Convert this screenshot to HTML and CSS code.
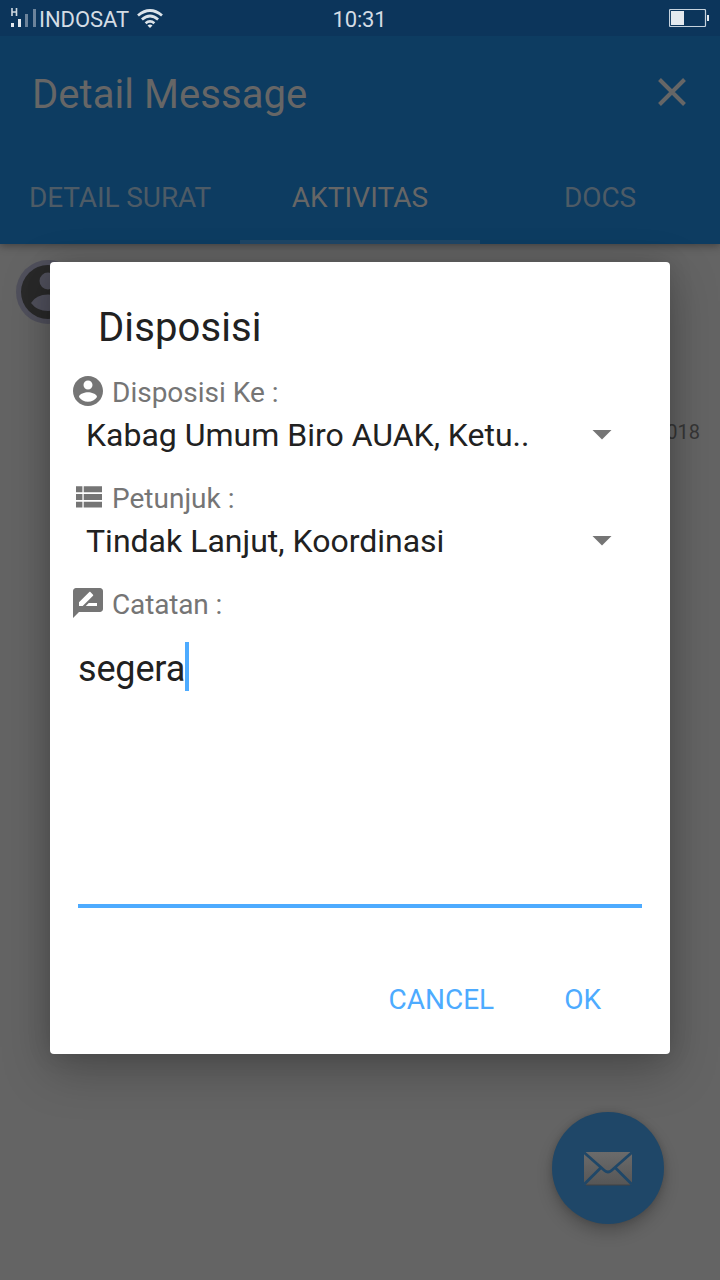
FILE: index.html
```html
<!DOCTYPE html>
<html lang="id">
<head>
<meta charset="utf-8">
<title>Detail Message</title>
<link rel="stylesheet" href="styles.css">
</head>
<body>
<div class="screen">
  <header class="header">
    <div class="status">
      <svg class="signal" width="28" height="20" viewBox="0 0 28 20">
        <path class="lit" d="M1 15h3v4h-3zM8 11h3v8h-3z"/>
        <path class="dim" d="M15 6h3v13h-3zM23 1h3v18h-3z"/>
        <path class="letter-mark" d="M2 0v8M6.500 0v8M2 4h4.500"/>
      </svg>
      <span class="carrier">INDOSAT</span>
      <svg class="wifi" width="26" height="20" viewBox="0 0 26 20">
        <path class="arc" d="M1 6.500Q13 -3.500 25 6.500M4.900 10.500Q13 3.500 21.100 10.500M8.600 14.200Q13 10.500 17.400 14.200"/>
        <path class="lit" d="M10.500 16.500Q13 14.600 15.500 16.500L13 19z"/>
      </svg>
      <span class="clock">10:31</span>
      <svg class="battery" width="40" height="18" viewBox="0 0 40 18">
        <rect class="cell" x=".5" y=".5" width="36" height="17" rx="1"/>
        <path class="lit" d="M2 2h13v14H2zM38 6h2v6h-2z"/>
      </svg>
    </div>
    <div class="toolbar">
      <h1 class="title">Detail Message</h1>
      <svg class="close" width="28" height="28" viewBox="0 0 28 28"><path d="M1.500 1.500l25 25M26.500 1.500l-25 25"/></svg>
    </div>
    <nav class="tabs">
      <span class="tab">DETAIL SURAT</span>
      <span class="tab active">AKTIVITAS</span>
      <span class="tab">DOCS</span>
    </nav>
  </header>
  <main class="content">
    <svg class="avatar" width="64" height="64" viewBox="0 0 64 64">
      <circle class="ring" cx="32" cy="32" r="32"/>
      <circle class="disc" cx="32" cy="32" r="27"/>
      <circle class="ring" cx="32" cy="21" r="8.500"/>
      <path class="ring" d="M15 43Q20 34.500 32 34.500T49 43Q43 51 32 51T15 43z"/>
    </svg>
    <span class="date">2018</span>
  </main>
  <div class="fab">
    <svg width="48" height="34" viewBox="0 0 48 34">
      <defs><linearGradient id="paper" x1="0" y1="0" x2="0" y2="1"><stop offset="0" stop-color="#6b6b6b"/><stop offset="1" stop-color="#565656"/></linearGradient></defs>
      <rect width="48" height="33" rx="1.500" fill="url(#paper)"/>
      <path class="edge" d="M2 33h44"/>
      <path class="fold" d="M0 .5L20.500 18.500Q24 21.500 27.500 18.500L48 .5M0 32.500L16.500 16M48 32.500L31.500 16"/>
    </svg>
  </div>
  <section class="dialog">
    <h2 class="heading">Disposisi</h2>
    <div class="label">
      <svg class="icon" width="36" height="36" viewBox="0 0 24 24"><path d="M12 2C6.480 2 2 6.480 2 12s4.480 10 10 10 10-4.480 10-10S17.520 2 12 2zm0 3c1.660 0 3 1.340 3 3s-1.340 3-3 3-3-1.340-3-3 1.340-3 3-3zm0 14.200c-2.500 0-4.710-1.280-6-3.220.03-1.990 4-3.080 6-3.080 1.990 0 5.970 1.090 6 3.080-1.290 1.940-3.500 3.220-6 3.220z"/></svg>
      <span>Disposisi Ke :</span>
    </div>
    <div class="select"><span class="value">Kabag Umum Biro AUAK, Ketu..</span><i class="arrow"></i></div>
    <div class="label">
      <svg class="icon" width="36" height="36" viewBox="0 0 36 36"><path d="M6 7.300h6.400v6H6zM13.700 7.300h18.300v6H13.700zM6 15h6.400v6H6zM13.700 15h18.300v6H13.700zM6 22.700h6.400v5.800H6zM13.700 22.700h18.300v5.800H13.700z"/></svg>
      <span>Petunjuk :</span>
    </div>
    <div class="select"><span class="value">Tindak Lanjut, Koordinasi</span><i class="arrow"></i></div>
    <div class="label">
      <svg class="icon" width="36" height="36" viewBox="0 0 24 24"><path d="M20 2H4c-1.100 0-1.990.9-1.990 2L2 22l4-4h14c1.100 0 2-.9 2-2V4c0-1.100-.9-2-2-2zM6 14v-2.470l6.880-6.880c.2-.2.51-.2.710 0l1.770 1.770c.2.2.2.51 0 .71L8.470 14H6zm12 0h-7.500l2-2H18v2z"/></svg>
      <span class="snug">Catatan :</span>
    </div>
    <div class="note"><span class="typed">segera</span><i class="caret"></i></div>
    <div class="actions"><span class="cancel">CANCEL</span><span class="ok">OK</span></div>
  </section>
</div>
</body>
</html>
```

FILE: styles.css
```css
* { box-sizing: border-box; }
body { margin: 0; font-family: Roboto, sans-serif; }
h1, h2 { margin: 0; font-weight: 400; }
svg { display: block; flex: none; }
.screen { position: relative; width: 720px; height: 1280px; overflow: hidden; background: #646464; }
.header { height: 244px; background: #0d3c61; box-shadow: 0 2px 8px rgba(0, 0, 0, .35); }

.status { position: relative; display: flex; align-items: center; height: 36px; padding: 0 11px 0 10px; background: #0c355b; color: #d4dce4; }
.carrier { font-size: 22px; line-height: 36px; padding-top: 3px; margin-left: 1px; letter-spacing: -.05px; }
.wifi { margin: 1px 0 0 8px; }
.clock { position: absolute; left: 0; right: 1px; top: 2px; text-align: center; font-size: 22px; line-height: 36px; letter-spacing: -.2px; }
.battery { margin-left: auto; }
.lit { fill: #e4e9ee; }
.dim { fill: #6c839b; }
.letter-mark { fill: none; stroke: #d0d9e1; stroke-width: 1.6; }
.arc { fill: none; stroke: #dce3e9; stroke-width: 2.8; }
.cell { fill: none; stroke: #c6d2dd; stroke-width: 1.2; }

.toolbar { display: flex; align-items: center; justify-content: space-between; height: 112px; padding: 0 34px 0 32px; }
.title { font-size: 40px; line-height: 48px; padding-top: 6px; color: #666; letter-spacing: .05px; }
.close { fill: none; stroke: #666; stroke-width: 4; }
.tabs { display: flex; height: 96px; }
.tab { flex: 1; text-align: center; font-size: 28px; line-height: 100px; height: 96px; color: #4d5b66; letter-spacing: -.1px; }
.active { color: #666; border-bottom: 4px solid #1f4666; letter-spacing: .1px; }

.content { display: flex; justify-content: space-between; padding: 16px 20px 0 16px; }
.ring { fill: #50505c; }
.disc { fill: #292929; }
.date { margin-top: 159px; font-size: 20px; line-height: 26px; color: #363636; }

.fab { position: absolute; left: 552px; top: 1112px; width: 112px; height: 112px; padding-top: 1px; display: grid; place-items: center; border-radius: 50%; background: #1f4768; box-shadow: 0 8px 16px rgba(0, 0, 0, .22), 0 0 6px rgba(0, 0, 0, .14); }
.fold { fill: none; stroke: #1f4768; stroke-width: 2.8; }
.edge { stroke: #434343; stroke-width: 1; }

.dialog { position: absolute; left: 50px; top: 262px; width: 620px; height: 792px; padding: 42px 28px 0 20px; border-radius: 4px; background: #fff; box-shadow: 0 16px 48px rgba(0, 0, 0, .25), 0 0 24px rgba(0, 0, 0, .12); color: #212121; }
.heading { padding-left: 28px; font-size: 40px; line-height: 48px; letter-spacing: .1px; }
.label { display: flex; align-items: center; gap: 6px; height: 36px; margin-top: 21px; font-size: 28px; line-height: 38px; color: #757575; }
.label span { padding-top: 3px; }
.snug { letter-spacing: -.15px; }
.icon { fill: #757575; }
.select { display: flex; align-items: center; justify-content: space-between; height: 49px; padding: 0 30px 0 16px; }
.value { font-size: 32px; line-height: 49px; padding-top: 3px; }
.arrow { width: 20px; height: 10px; margin-top: 2px; background: #757575; clip-path: polygon(0 0, 100% 0, 50% 100%); }
.note { display: flex; height: 266px; margin: 21px 0 0 8px; border-bottom: 4px solid #4dabff; }
.typed { font-size: 36px; line-height: 54px; letter-spacing: -.15px; }
.caret { width: 4px; height: 49px; background: #4dabff; }
.actions { display: flex; gap: 70px; justify-content: flex-end; padding: 74px 41px 0 0; font-size: 28px; line-height: 36px; color: #4dabff; }
```
